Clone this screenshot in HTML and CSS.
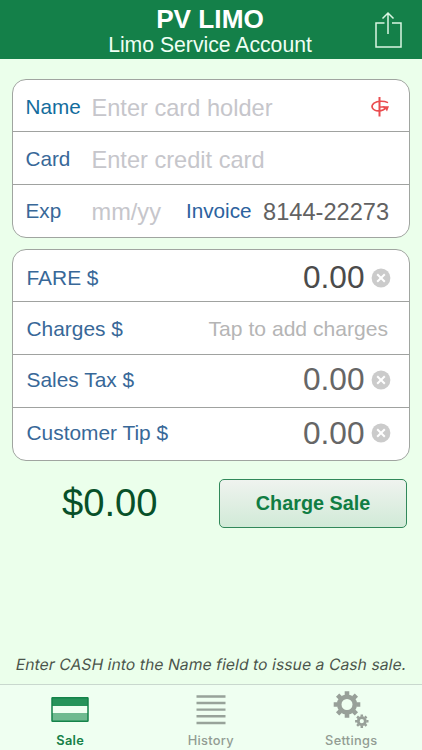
FILE: index.html
```html
<!DOCTYPE html>
<html lang="en">
<head>
<meta charset="utf-8">
<title>PV LIMO</title>
<link rel="stylesheet" href="styles.css">
</head>
<body>
<svg class="defs" width="0" height="0" aria-hidden="true">
  <symbol id="clear" viewBox="0 0 20 20">
    <circle cx="10" cy="10" r="9.4" fill="#cbcbcb"/>
    <path d="M6.2 6.2l7.6 7.6M13.8 6.2l-7.6 7.6" stroke="#fff" stroke-width="2"/>
  </symbol>
</svg>
<div class="app">
  <header class="header">
    <div></div>
    <div class="titles">
      <h1>PV LIMO</h1>
      <p>Limo Service Account</p>
    </div>
    <svg class="share" width="28" height="38" viewBox="0 0 28 38" fill="none" stroke="#d9f5e2" stroke-width="1.5">
      <path d="M10.5 12H2v24h25V12h-9M14 23V2M8.5 7.5L14 2l5.5 5.5"/>
    </svg>
  </header>

  <main class="main">
    <section class="card">
      <div class="row name">
        <span class="label">Name</span><span class="hint">Enter card holder</span>
        <svg class="swipe" width="20" height="22" viewBox="0 0 20 22" fill="none" stroke="#ea4d50">
          <path d="M9.5 1v19.5" stroke-width="2"/>
          <path d="M18 6.6C14 4.7 7.5 4.6 4 7.1c-4 3.1-1.5 7.6 4.4 7.8 3.6.1 6-1.2 7.4-3.4M9.5 11h5" stroke-width="1.6"/>
          <path d="M12 10.2h7l-2 5.2-1.6-2.4z" fill="#ea4d50" stroke="none"/>
        </svg>
      </div>
      <div class="row">
        <span class="label">Card</span><span class="hint">Enter credit card</span>
      </div>
      <div class="row exp">
        <span class="label">Exp</span><span class="hint">mm/yy</span>
        <span class="label invoice">Invoice</span><span class="number">8144-22273</span>
      </div>
    </section>

    <section class="card amounts">
      <div class="row fare">
        <span class="label">FARE $</span><span class="value">0.00</span><svg class="clear"><use href="#clear"/></svg>
      </div>
      <div class="row charges">
        <span class="label">Charges $</span><span class="tap">Tap to add charges</span>
      </div>
      <div class="row tax">
        <span class="label">Sales Tax $</span><span class="value">0.00</span><svg class="clear"><use href="#clear"/></svg>
      </div>
      <div class="row tip">
        <span class="label">Customer Tip $</span><span class="value">0.00</span><svg class="clear"><use href="#clear"/></svg>
      </div>
    </section>

    <div class="checkout">
      <div class="total">$0.00</div>
      <button class="charge" type="button">Charge Sale</button>
    </div>
    <p class="note">Enter CASH into the Name field to issue a Cash sale.</p>
  </main>

  <nav class="tabs">
    <div class="tab active">
      <svg width="40" height="40" viewBox="0 0 40 40">
        <path d="M2 12h36v9H2z" fill="#26935a"/>
        <path d="M2 21h36v7H2z" fill="#effff1"/>
        <path d="M2 28h36v8H2z" fill="#6fba90"/>
        <rect x="2" y="12.7" width="36" height="23.6" rx=".6" fill="none" stroke="#14834a" stroke-width="1.5"/>
      </svg>
      <span>Sale</span>
    </div>
    <div class="tab">
      <svg width="40" height="40" viewBox="0 0 40 40">
        <path d="M5.5 11.5h29M5.5 18h29M5.5 24.6h29M5.5 31.2h29M5.5 38h29" stroke="#98a39a" stroke-width="2.4"/>
      </svg>
      <span>History</span>
    </div>
    <div class="tab">
      <svg width="40" height="40" viewBox="0 0 40 40" fill="none" stroke="#98a099">
        <circle cx="16" cy="19.5" r="7.8" stroke-width="4.6"/>
        <path d="M16 6.2v4M16 28.8v4M2.7 19.5h4M25.3 19.5h4M6.6 10.1l2.8 2.8M22.6 26.1l2.8 2.8M25.4 10.1l-2.8 2.8M9.4 26.1l-2.8 2.8" stroke-width="4.6"/>
        <circle cx="30.8" cy="36.2" r="3.5" stroke-width="2.8"/>
        <path d="M30.8 29.5v2.2M30.8 40.7v2.2M24.1 36.2h2.2M35.3 36.2h2.2M26.1 31.5l1.5 1.5M34 39.4l1.5 1.5M35.5 31.5l-1.5 1.5M27.6 39.4l-1.5 1.5" stroke-width="2.5"/>
      </svg>
      <span>Settings</span>
    </div>
  </nav>
</div>
</body>
</html>
```
FILE: styles.css
```css
* { box-sizing: border-box; }
body { margin: 0; font-family: "Liberation Sans", Arial, sans-serif; }
h1, p { margin: 0; }
svg { display: block; flex: none; overflow: visible; }
.defs { position: absolute; }
.app { width: 422px; height: 750px; display: flex; flex-direction: column; background: #ebffeb; overflow: hidden; }
.header { height: 59px; flex: none; display: grid; grid-template-columns: 47px 1fr 49px; background: #148049; color: #fff; }
.titles { text-align: center; padding-top: 4px; white-space: nowrap; }
.titles h1 { font-size: 26.2px; line-height: 30px; }
.titles p { font-size: 21.2px; line-height: 24px; margin-top: -1px; color: #effff4; }
.share { margin: 11px 0 0 1px; }

.main { flex: 1; padding: 20px 12px 0; display: flex; flex-direction: column; }
.card { flex: none; width: 398px; height: 159px; border: 1.5px solid #a0a5a0; border-radius: 14px; background: #fff; overflow: hidden; }
.amounts { height: 212px; margin-top: 11px; }
.row { height: 53px; display: flex; align-items: flex-start; padding: 15px 20px 0 12.5px; white-space: nowrap; border-bottom: 1.5px solid #a0a2a0; }
.row:first-child { height: 52px; }
.row:last-child { border-bottom: 0; }
.label { width: 66px; flex: none; font-size: 20.7px; line-height: 24px; color: #386898; }
.name .label { color: #136c9d; }
.hint, .number { font-size: 23.6px; line-height: 24px; margin-top: 1px; color: #c6c6cb; }
.number { color: #626262; margin-left: auto; }
.exp { padding-top: 14px; }
.invoice { margin-left: 25px; color: #2c629e; }
.swipe { margin: 1px 0 0 auto; }
.name { padding-right: 19px; }
.amounts .row { padding-left: 13.5px; padding-right: 18px; }
.amounts .label { width: auto; font-size: 20.9px; }
.amounts .fare { padding-top: 16px; }
.amounts .tax, .amounts .tip { padding-top: 13px; }
.value { margin: -7px 0 0 auto; font-size: 31.6px; line-height: 36px; color: #666; }
.amounts .tip .value { margin-top: -6px; }
.fare .value { color: #4b4b4b; }
.tap { margin-left: auto; margin-right: 3px; font-size: 21.1px; line-height: 24px; color: #b5b5b5; }
.clear { width: 20px; height: 20px; margin: 2px 0 0 6.5px; }

.checkout { display: flex; align-items: flex-start; margin-top: 18px; }
.total { width: 207px; padding-left: 50px; font-size: 38.2px; line-height: 48px; color: #075029; }
.charge { width: 188px; height: 49px; padding: 0; border: 1.4px solid #31885a; border-radius: 5px; background: linear-gradient(#eff3ef, #d1ead7); font: bold 19.8px "Liberation Sans", Arial, sans-serif; color: #107d43; }
.note { width: max-content; margin: auto 0 9px 3.5px; white-space: nowrap; font: 15.6px/20px Inter, sans-serif; letter-spacing: .1px; color: #4b554b; transform: skewX(-11deg); }

.tabs { height: 66px; flex: none; display: grid; grid-template-columns: repeat(3, 140.5px); border-top: 1px solid #c9d8ce; background: #effff1; }
.tab { display: flex; flex-direction: column; align-items: center; font: 500 12.8px/16px Inter, sans-serif; letter-spacing: .3px; color: #929c93; }
.tab span { margin-top: 8px; }
.active { color: #168048; font-weight: 600; }
```
